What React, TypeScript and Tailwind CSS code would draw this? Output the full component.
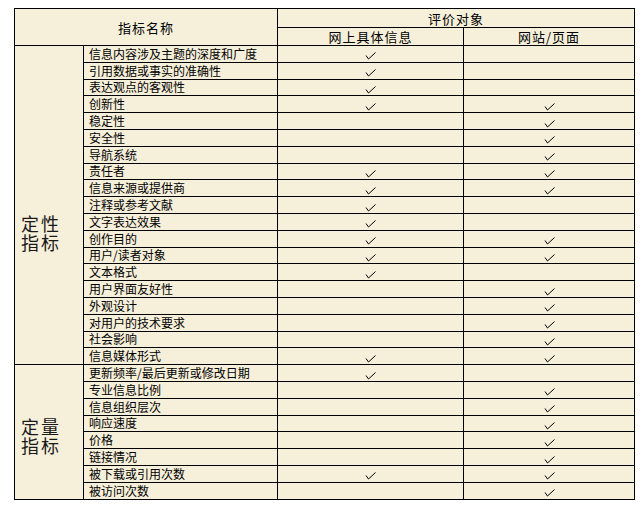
const cjk = { fontFamily: '"Noto Sans CJK SC", "Noto Sans", sans-serif' };

type Row = { name: string; info: boolean; site: boolean };

const qualitative: Row[] = [
  { name: "信息内容涉及主题的深度和广度", info: true, site: false },
  { name: "引用数据或事实的准确性", info: true, site: false },
  { name: "表达观点的客观性", info: true, site: false },
  { name: "创新性", info: true, site: true },
  { name: "稳定性", info: false, site: true },
  { name: "安全性", info: false, site: true },
  { name: "导航系统", info: false, site: true },
  { name: "责任者", info: true, site: true },
  { name: "信息来源或提供商", info: true, site: true },
  { name: "注释或参考文献", info: true, site: false },
  { name: "文字表达效果", info: true, site: false },
  { name: "创作目的", info: true, site: true },
  { name: "用户/读者对象", info: true, site: true },
  { name: "文本格式", info: true, site: false },
  { name: "用户界面友好性", info: false, site: true },
  { name: "外观设计", info: false, site: true },
  { name: "对用户的技术要求", info: false, site: true },
  { name: "社会影响", info: false, site: true },
  { name: "信息媒体形式", info: true, site: true },
];

const quantitative: Row[] = [
  { name: "更新频率/最后更新或修改日期", info: true, site: false },
  { name: "专业信息比例", info: false, site: true },
  { name: "信息组织层次", info: false, site: true },
  { name: "响应速度", info: false, site: true },
  { name: "价格", info: false, site: true },
  { name: "链接情况", info: false, site: true },
  { name: "被下载或引用次数", info: true, site: true },
  { name: "被访问次数", info: false, site: true },
];

function Check() {
  return (
    <svg width="11" height="8" viewBox="0 0 11 8" className="mx-auto mt-[5px] block">
      <polyline
        points="1,3.5 3.5,7 10.5,0.5"
        fill="none"
        stroke="#000"
        strokeWidth="1"
      />
    </svg>
  );
}

function Group({ label, rows, top }: { label: string; rows: Row[]; top: string }) {
  return (
    <>
      {rows.map((r, i) => (
        <tr key={r.name} className="h-[16.8px]">
          {i === 0 && (
            <td
              rowSpan={rows.length}
              className={`border border-black align-top pl-[6px] ${top}`}
            >
              {/* narrow box so the four characters wrap two per line */}
              <div className="w-[40px] text-[18px] leading-[19px] tracking-[2px] text-[#1a1a1a]">
                {label}
              </div>
            </td>
          )}
          <td className="border border-black pl-[5px] text-[12px] leading-[14px] whitespace-nowrap">
            {r.name}
          </td>
          <td className="border border-black p-0 align-middle">{r.info && <Check />}</td>
          <td className="border border-black p-0 align-middle">{r.site && <Check />}</td>
        </tr>
      ))}
    </>
  );
}

export default function App() {
  return (
    <div className="min-h-[509px] w-[642px] bg-white pt-[8px] pl-[14px]" style={cjk}>
      <table className="w-[620px] table-fixed border-collapse bg-[#f6efda] text-black">
        <colgroup>
          <col className="w-[69px]" />
          <col className="w-[194px]" />
          <col className="w-[186px]" />
          <col className="w-[171px]" />
        </colgroup>
        <thead>
          <tr className="h-[19px]">
            <th
              rowSpan={2}
              colSpan={2}
              className="border border-black text-center text-[13px] font-normal leading-[15px] tracking-[1px]"
            >
              指标名称
            </th>
            <th
              colSpan={2}
              className="border border-black text-center text-[13px] font-normal leading-[15px] tracking-[1px]"
            >
              评价对象
            </th>
          </tr>
          <tr className="h-[18px]">
            <th className="border border-black text-center text-[13px] font-normal leading-[15px] tracking-[1px]">
              网上具体信息
            </th>
            <th className="border border-black text-center text-[13px] font-normal leading-[15px] tracking-[1px]">
              网站/页面
            </th>
          </tr>
        </thead>
        <tbody>
          <Group label="定性指标" rows={qualitative} top="pt-[168px]" />
          <Group label="定量指标" rows={quantitative} top="pt-[52px]" />
        </tbody>
      </table>
    </div>
  );
}
